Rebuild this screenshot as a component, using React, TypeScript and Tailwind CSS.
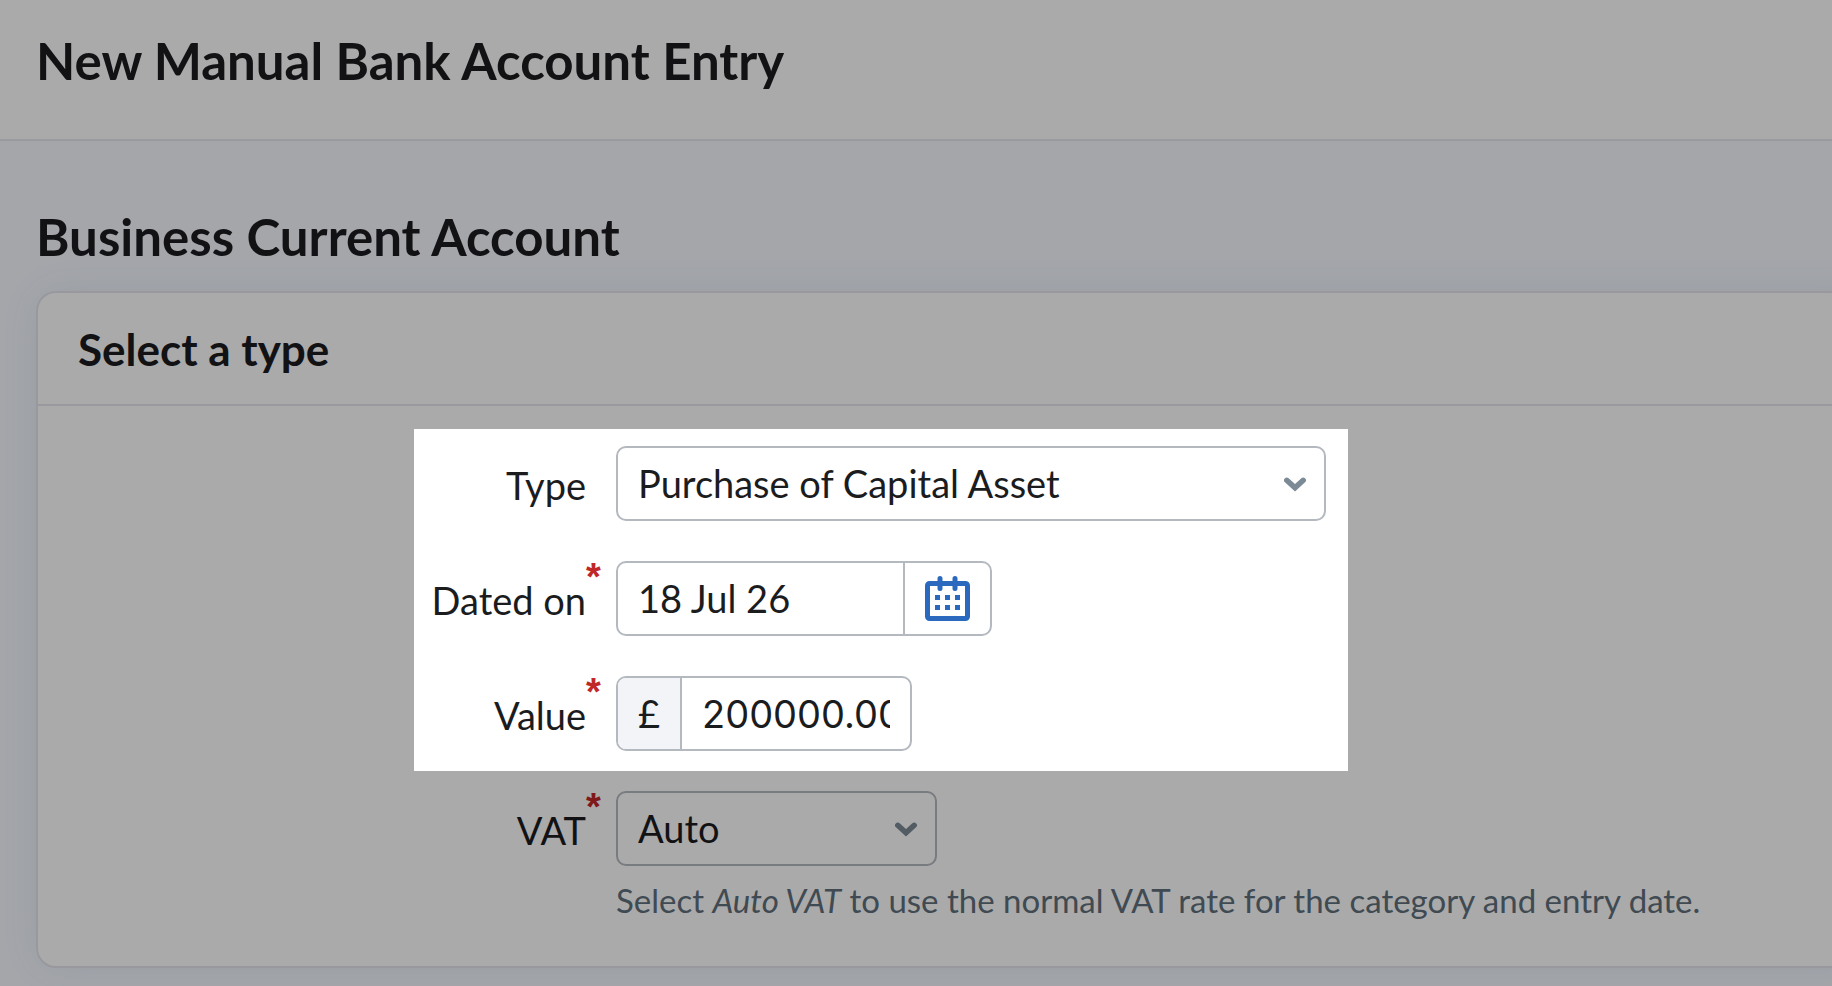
import { useState } from 'react';
import type { ReactNode } from 'react';

interface FieldRowProps {
  id: string;
  label: string;
  required?: boolean;
  children: ReactNode;
}

interface SelectFieldProps {
  id: string;
  options: string[];
  className: string;
}

const entryTypes = ['Purchase of Capital Asset', 'Payment', 'Refund', 'Transfer to Another Account'];
const vatRates = ['Auto', '20%', '5%', '0%'];

const boxClass = 'h-[75px] rounded-[10px] border-2 border-[#b4b9c0] bg-white';

function FieldRow({ id, label, required, children }: FieldRowProps) {
  return (
    <div className="flex items-start">
      <label htmlFor={id} className="w-[172px] shrink-0 pt-[15px] text-right leading-[48px]">
        <span className="relative">
          {label}
          {required && (
            <span className="absolute left-full -top-6 font-['Liberation_Sans',sans-serif] font-bold leading-[48px] text-[#c02727]">
              *
            </span>
          )}
        </span>
      </label>
      <div className="ml-[30px] min-w-0 flex-1">{children}</div>
    </div>
  );
}

function SelectField({ id, options, className }: SelectFieldProps) {
  return (
    <div className={`grid items-center ${className}`}>
      <select
        id={id}
        className={`col-start-1 row-start-1 w-full appearance-none pl-5 pr-14 outline-none ${boxClass}`}
      >
        {options.map((option) => (
          <option key={option}>{option}</option>
        ))}
      </select>
      <svg
        className="pointer-events-none col-start-1 row-start-1 mr-[18px] justify-self-end"
        width="24"
        height="16"
        viewBox="0 0 24 16"
        fill="none"
        stroke="#7b8a94"
        strokeWidth="5.5"
        strokeLinecap="round"
      >
        <path d="M2.8 4.3l8.2 7.5 8.2-7.5" />
      </svg>
    </div>
  );
}

function CalendarIcon() {
  return (
    <svg width="45" height="45" viewBox="0 0 45 45" fill="none" stroke="#2a69bd" strokeWidth="5">
      <rect x="2.5" y="7.5" width="40" height="35" rx="2" />
      <path d="M15 2.5v10M30 2.5v10" strokeLinecap="round" />
      <path d="M10 21.5h5M20 21.5h5M30 21.5h5M10 31.5h5M20 31.5h5M30 31.5h5" />
    </svg>
  );
}

export default function App() {
  const [date, setDate] = useState('18 Jul 26');
  const [value, setValue] = useState('200000.00');

  return (
    <div className="min-h-screen overflow-hidden bg-[#f7f9ff] font-['Lato','Liberation_Sans',sans-serif] text-[38px] text-[#1b1c1e]">
      <header className="border-b-2 border-[#e6e8ee] bg-white px-9 pt-[31px] pb-12">
        <h1 className="text-[51px] font-bold leading-[60px]">New Manual Bank Account Entry</h1>
      </header>

      <main className="pt-[66px] pb-4 pl-9">
        <h2 className="text-[51px] font-bold leading-[60px]">Business Current Account</h2>

        {/* Runs past the right edge of the window */}
        <section className="-mr-10 mt-6 rounded-[20px] border-2 border-[#e4e5ed] bg-white shadow-[0_0_40px_#e4eef7]">
          <div className="border-b-2 border-[#e4e5ed] px-10 pt-8 pb-[31px]">
            <h3 className="text-[44px] font-bold leading-[48px]">Select a type</h3>
          </div>

          <form className="pt-[23px] pb-[46px] pl-[376px]">
            {/* Spotlight: the large shadow dims everything around these fields */}
            <div className="relative z-10 flex max-w-[934px] flex-col gap-10 bg-white pt-[17px] pr-[22px] pb-5 shadow-[0_0_0_3000px_rgba(0,0,0,0.333)]">
              <FieldRow id="type" label="Type">
                <SelectField id="type" options={entryTypes} className="w-full" />
              </FieldRow>

              <FieldRow id="dated-on" label="Dated on" required>
                <div className={`flex w-[376px] overflow-hidden ${boxClass}`}>
                  <input
                    id="dated-on"
                    type="text"
                    value={date}
                    onChange={(e) => setDate(e.target.value)}
                    className="min-w-0 flex-1 px-5 outline-none"
                  />
                  <button
                    type="button"
                    aria-label="Choose date"
                    className="flex w-[87px] items-center justify-center border-l-2 border-[#b4b9c0]"
                  >
                    <CalendarIcon />
                  </button>
                </div>
              </FieldRow>

              <FieldRow id="value" label="Value" required>
                <div className={`flex w-[296px] overflow-hidden ${boxClass}`}>
                  <span className="flex w-16 shrink-0 items-center justify-center border-r-2 border-[#b4b9c0] bg-[#f3f4f8]">
                    £
                  </span>
                  <div className="min-w-0 flex-1 px-5">
                    <input
                      id="value"
                      type="text"
                      value={value}
                      onChange={(e) => setValue(e.target.value)}
                      className="h-full w-full font-['Inter',sans-serif] outline-none"
                    />
                  </div>
                </div>
              </FieldRow>
            </div>

            <div className="pt-5">
              <FieldRow id="vat" label="VAT" required>
                <SelectField id="vat" options={vatRates} className="w-[321px]" />
                <p className="mt-[14px] text-[33px] leading-10 text-[#5f6f7b]">
                  Select <em>Auto VAT</em> to use the normal VAT rate for the category and entry date.
                </p>
              </FieldRow>
            </div>
          </form>
        </section>
      </main>
    </div>
  );
}
